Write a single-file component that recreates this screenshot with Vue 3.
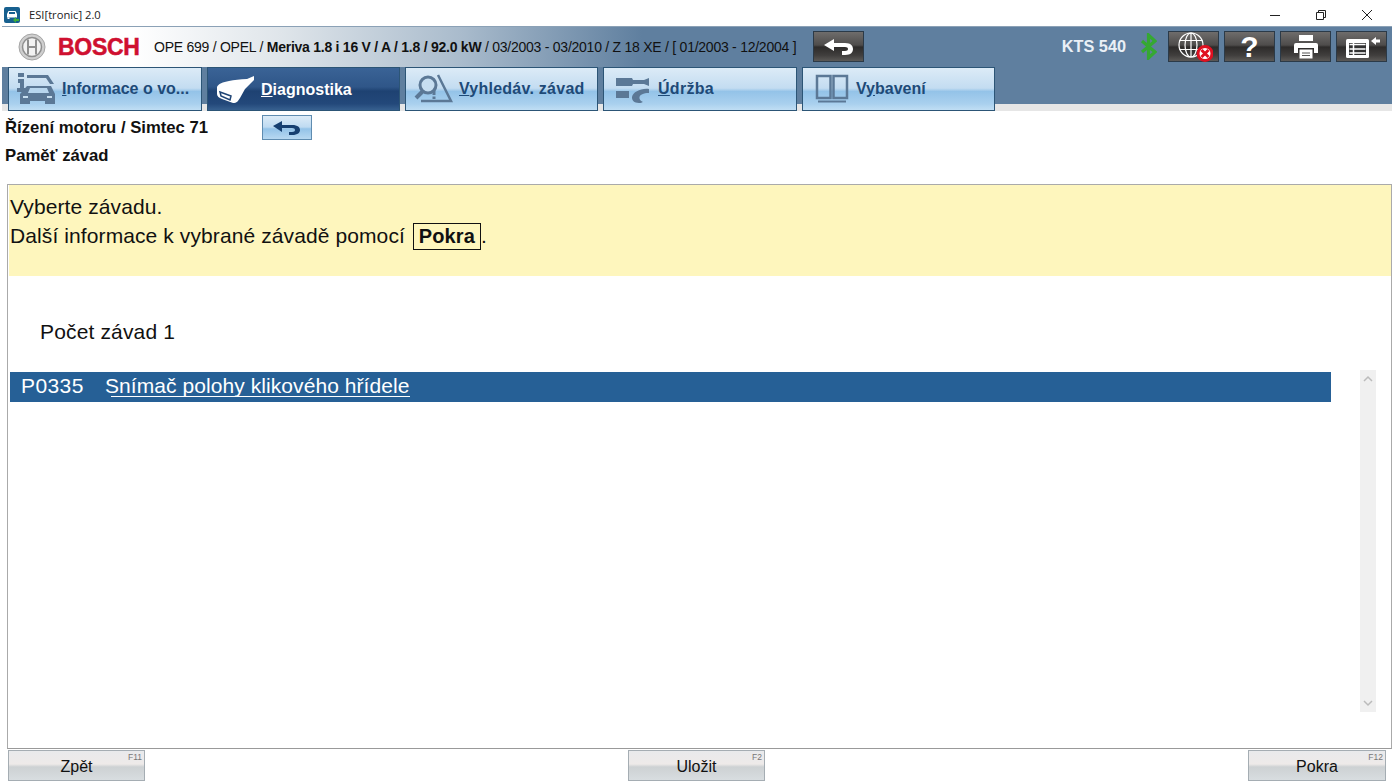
<script setup>
const tabs = [
  { key: 'info', pre: '', u: 'I', post: 'nformace o vo...', width: 194 },
  { key: 'diag', pre: '', u: 'D', post: 'iagnostika', width: 193, active: true },
  { key: 'find', pre: '', u: 'V', post: 'yhledáv. závad', width: 193 },
  { key: 'serv', pre: '', u: 'Ú', post: 'držba', width: 194 },
  { key: 'book', pre: 'V', u: 'y', post: 'bavení', width: 193 }
]
</script>

<template>
  <div class="app">
    <div class="titlebar">
      <svg class="appicon" viewBox="0 0 16 16" width="16" height="16">
        <rect x="0" y="0" width="16" height="16" rx="2" fill="#17608f" />
        <path d="M3 7l1.500-3h7l1.500 3v3.500H3z" fill="#fff" />
        <rect x="5" y="5" width="6" height="2" fill="#17608f" />
        <rect x="3.500" y="10.500" width="2" height="1.500" fill="#fff" />
        <path d="M9 13l3-3v2h3v2h-3v2z" fill="#3fae3a" />
      </svg>
      <span class="apptitle">ESI[tronic] 2.0</span>
      <div class="winctl">
        <svg width="12" height="12" viewBox="0 0 12 12"><path d="M1 6.500h10" stroke="#222" fill="none" /></svg>
        <svg width="12" height="12" viewBox="0 0 12 12"><path d="M1.500 3.500h7v7h-7zM3.500 3.500v-2h7v7h-2" stroke="#222" fill="none" /></svg>
        <svg width="12" height="12" viewBox="0 0 12 12"><path d="M1 1l10 10M11 1L1 11" stroke="#222" fill="none" /></svg>
      </div>
    </div>

    <header class="head">
      <div class="toprow">
        <svg class="boschlogo" width="28" height="28" viewBox="0 0 28 28">
          <circle cx="14" cy="14" r="13" fill="#cfcfcf" stroke="#a5a5a5" />
          <circle cx="14" cy="14" r="9.500" fill="#f2f2f2" stroke="#8f8f8f" stroke-width="1.500" />
          <path d="M10 6.500v15M18 6.500v15M10 14h8" stroke="#8f8f8f" stroke-width="2" fill="none" />
        </svg>
        <span class="bosch">BOSCH</span>
        <span class="vehicle">OPE 699 / OPEL / <b>Meriva 1.8 i 16 V / A / 1.8 / 92.0 kW</b> / 03/2003 - 03/2010 / Z 18 XE / [ 01/2003 - 12/2004 ]</span>
        <button class="darkbtn backdark">
          <svg width="32" height="18" viewBox="0 0 32 18"><path d="M1 7l10-6v4h11c6 0 8 3 8 6s-2 6-8 6h-3v-4h3c2 0 3-.8 3-2s-1-2-3-2H11v4z" fill="#fff" /></svg>
        </button>
        <span class="kts">KTS 540</span>
        <svg class="bt" width="17" height="27" viewBox="0 0 17 27">
          <path d="M2 8L15 19L8.500 25V2L15 8L2 19" fill="none" stroke="#35a832" stroke-width="3.200" />
        </svg>
        <div class="tools">
          <button class="darkbtn">
            <svg width="38" height="30" viewBox="0 0 38 30">
              <g fill="none" stroke="#fff" stroke-width="1.200">
                <circle cx="16" cy="13" r="12" />
                <ellipse cx="16" cy="13" rx="6" ry="12" />
                <path d="M16 1v24M4.500 8.500h23M4.500 17.500h23" />
              </g>
              <circle cx="30" cy="21.500" r="7" fill="#fff" stroke="#e01020" stroke-width="3" />
              <path d="M26.500 18l7 7M33.500 18l-7 7" stroke="#e01020" stroke-width="3" />
            </svg>
          </button>
          <button class="darkbtn qm">?</button>
          <button class="darkbtn">
            <svg width="26" height="26" viewBox="0 0 26 26">
              <rect x="6" y="1" width="14" height="6" fill="#fff" />
              <path d="M1 11q0-2 2-2h20q2 0 2 2v8h-4v-5H5v5H1z" fill="#fff" />
              <path d="M6.500 15.500h13v9h-13z" fill="#fff" />
              <path d="M9 19h8M9 21.500h8" stroke="#555" />
            </svg>
          </button>
          <button class="darkbtn">
            <svg width="36" height="24" viewBox="0 0 36 24">
              <rect x="2" y="4" width="23" height="19" rx="1.500" fill="#fff" />
              <rect x="5" y="8" width="17" height="12" fill="#333" />
              <path d="M5.500 9.500h16M5.500 14h16M5.500 18h16M9.500 8v12" stroke="#fff" stroke-width="1.500" />
              <path d="M27 6l5-4v2.500h4v3h-4V10z" fill="#fff" />
            </svg>
          </button>
        </div>
      </div>
      <nav class="tabs">
        <div v-for="t in tabs" :key="t.key" class="tab" :class="{ active: t.active, [t.key]: true }" :style="{ width: t.width + 'px' }">
          <svg v-if="t.key === 'info'" class="ticon" width="40" height="32" viewBox="0 0 40 32">
            <g fill="#5b7896">
              <rect x="1" y="0" width="6" height="4" />
              <path d="M1 6h6v9h3v4H0v-4h3v-5H1z" />
              <path d="M10 2h21l6 9h-4l-4-6H10z" />
              <path d="M3 21l7-8h24l4 8v7H3z" />
              <rect x="3" y="28" width="10" height="3" />
              <rect x="28" y="28" width="10" height="3" />
            </g>
            <path d="M13 15h17l2 5H11z" fill="#b8d6ee" />
            <path d="M6 24h5M30 24h5" stroke="#c8dff0" stroke-width="2" />
          </svg>
          <svg v-else-if="t.key === 'diag'" class="ticon" width="40" height="30" viewBox="0 0 40 30">
            <path d="M38 2L31 5C24 5 18 6 13 7C7 8 2 10 1 13V20C1 22 3 24 6 25L17 29C21 29 22 27 24 24L29 15L38 6Z" fill="#fff" />
            <path d="M4 18L15 22L14 26L5 22Z" fill="#fff" stroke="#1f4475" stroke-width="1.500" />
          </svg>
          <svg v-else-if="t.key === 'find'" class="ticon" width="40" height="32" viewBox="0 0 40 32">
            <path d="M24 2L37 28H7" fill="none" stroke="#5b7896" stroke-width="2.500" />
            <path d="M9 18L2 25" stroke="#5b7896" stroke-width="4" />
            <circle cx="14" cy="12" r="8" fill="#c6def1" stroke="#5b7896" stroke-width="3" />
            <path d="M20 17v5" stroke="#5b7896" stroke-width="3" />
            <path d="M20 23.500v2.500" stroke="#5b7896" stroke-width="3" />
          </svg>
          <svg v-else-if="t.key === 'serv'" class="ticon" width="36" height="28" viewBox="0 0 36 28">
            <path d="M1 3h16l1 2h11l5-2v8l-5-2H18l-1 2H1z" fill="#5b7896" />
            <path d="M1 16h13v7H1z" fill="#5b7896" />
            <path d="M34 14c-8-1-16 3-17 8-.3 3 2 6 7 6 2 0 3-.5 4-1-5-2-6-9 6-9z" fill="#5b7896" />
          </svg>
          <svg v-else-if="t.key === 'book'" class="ticon" width="34" height="30" viewBox="0 0 34 30">
            <path d="M2 2h13.500v22H2zM18.500 2H32v22H18.500z" fill="none" stroke="#5b7896" stroke-width="2.500" />
            <path d="M3 27.500h28" stroke="#5b7896" stroke-width="2" />
          </svg>
          <span class="tlabel">{{ t.pre }}<u>{{ t.u }}</u>{{ t.post }}</span>
        </div>
      </nav>
    </header>

    <section class="crumbs">
      <div class="crumbrow">
        <span class="crumb">Řízení motoru / Simtec 71</span>
        <button class="minib">
          <svg width="30" height="16" viewBox="0 0 30 16"><path d="M1 6l9-5v4h10c6 0 8 2.500 8 5s-2 5-8 5h-3v-3h3c2 0 3-.8 3-2s-1-2-3-2H10v4z" fill="#163f70" /></svg>
        </button>
      </div>
      <div class="crumb second">Paměť závad</div>
    </section>

    <main class="frame">
      <div class="hint">
        <div class="line">Vyberte závadu.</div>
        <div class="line">Další informace k vybrané závadě pomocí <span class="kbd">Pokra</span>.</div>
      </div>
      <div class="count">Počet závad 1</div>
      <div class="listwrap">
        <div class="list">
          <div class="row">
            <span class="code">P0335</span>
            <span class="desc">Snímač polohy klikového hřídele</span>
          </div>
        </div>
        <div class="scroll">
          <svg width="10" height="7" viewBox="0 0 10 7"><path d="M1 6l4-4 4 4" fill="none" stroke="#bbb" stroke-width="1.500" /></svg>
          <svg width="10" height="7" viewBox="0 0 10 7"><path d="M1 1l4 4 4-4" fill="none" stroke="#bbb" stroke-width="1.500" /></svg>
        </div>
      </div>
    </main>

    <footer class="foot">
      <button class="fbtn">Zpět<small>F11</small></button>
      <button class="fbtn">Uložit<small>F2</small></button>
      <button class="fbtn wide">Pokra<small>F12</small></button>
    </footer>
  </div>
</template>

<style scoped>
.app {
  width: 1397px;
  height: 782px;
  overflow: hidden;
  display: flex;
  flex-direction: column;
  background: #fff;
  font-family: "Liberation Sans", Arial, sans-serif;
  color: #111;
}
button { font-family: inherit; padding: 0; cursor: default; }
.titlebar {
  height: 26px;
  display: flex;
  align-items: center;
  padding: 3px 0 0 4px;
  box-sizing: border-box;
}
.apptitle {
  margin-left: 9px;
  font: 11.2px "Open Sans", sans-serif;
  color: #222;
}
.winctl {
  margin-left: auto;
  margin-right: 24px;
  display: flex;
  gap: 34px;
}
.head { margin: 0 5px 0 2px; }
.toprow {
  height: 41px;
  box-sizing: border-box;
  border-top: 1px solid #8ba1b6;
  padding: 4px 5px 0 16px;
  display: flex;
  align-items: flex-start;
  background: linear-gradient(90deg, #fff 0, #fff 130px, #dfe5ea 280px, #a9bbcc 460px, #5f7f9f 640px);
  background-color: #5f7f9f;
}
.boschlogo { margin-top: 2px; }
.bosch {
  margin-left: 12px;
  width: 96px;
  font-size: 23px;
  line-height: 33px;
  font-weight: 700;
  color: #cf1030;
  -webkit-text-stroke: .5px #cf1030;
  letter-spacing: -.3px;
}
.vehicle {
  font-size: 14px;
  line-height: 33px;
  color: #111;
  width: 659px;
  white-space: nowrap;
  letter-spacing: -.25px;
}
.darkbtn {
  width: 51px;
  height: 31px;
  box-sizing: border-box;
  border: 1px solid #2b3a48;
  background: linear-gradient(#6f6d6c, #4e4c4b 45%, #2d2b2a 52%, #403e3d 80%, #5b5957);
  display: flex;
  align-items: center;
  justify-content: center;
  color: #fff;
}
.kts {
  margin-left: auto;
  font-size: 16.300px;
  line-height: 31px;
  font-weight: 700;
  color: #eaf0f6;
}
.bt { margin: 2px 11px 0 14px; }
.tools { display: flex; gap: 5px; }
.qm { font-size: 30px; font-weight: 700; line-height: 1; }
.tabs {
  height: 44px;
  padding-left: 6px;
  display: flex;
  gap: 5px;
  background: linear-gradient(#5f7f9f 0 37px, #e6e6e6 37px);
}
.tab {
  box-sizing: border-box;
  height: 44px;
  border: 1px solid #2c5576;
  background: linear-gradient(#dcebf7, #c3dcf1 48%, #94c3e8 56%, #a9d0ee 85%, #c0def4);
  display: flex;
  align-items: center;
  padding-left: 8px;
  color: #1e4a78;
  font-size: 16px;
  font-weight: 700;
  white-space: nowrap;
}
.tab.active {
  background: linear-gradient(#3a6396, #2f5688 45%, #1e4272 55%, #23487a 85%, #37608f);
  color: #fff;
}
.ticon { flex: none; }
.tlabel { margin-left: 5px; }
.active .tlabel { margin-left: 5px; margin-top: 1px; }
.find .tlabel { margin-left: 5px; letter-spacing: .25px; }
.serv .ticon { margin-left: 3px; }
.serv .tlabel { margin-left: 7px; letter-spacing: .3px; }
.book .ticon { margin-left: 4px; }
.book .tlabel { margin-left: 7px; }
.crumbs {
  height: 73px;
  padding: 4px 0 0 5px;
  box-sizing: border-box;
}
.crumbrow { display: flex; height: 25px; align-items: center; }
.crumb {
  font-size: 16.7px;
  font-weight: 700;
  color: #111;
  width: 257px;
  white-space: nowrap;
  padding-top: 1px;
}
.second { margin-top: 2px; line-height: 25px; width: auto; }
.minib {
  width: 50px;
  height: 25px;
  box-sizing: border-box;
  border: 1px solid #5f8cb0;
  background: linear-gradient(#dcebf7, #bfdbf1 48%, #94c3e8 56%, #b7d8f1);
  display: flex;
  align-items: center;
  justify-content: center;
}
.frame {
  height: 565px;
  margin: 0 5px 0 7px;
  box-sizing: border-box;
  border: 1px solid #aaa;
  border-bottom-color: #999;
  display: flex;
  flex-direction: column;
}
.hint {
  height: 91px;
  box-sizing: border-box;
  margin-left: 1px;
  padding: 7px 0 0 1px;
  background: #fef6bd;
  font-size: 21px;
}
.line { height: 29px; line-height: 29px; letter-spacing: .1px; white-space: nowrap; }
.kbd {
  display: inline-block;
  height: 27px;
  line-height: 25px;
  box-sizing: border-box;
  border: 1px solid #111;
  padding: 0 5px;
  margin-left: 2px;
  font-weight: 700;
  font-size: 20px;
  vertical-align: top;
  margin-top: 2px;
}
.count {
  margin: 44px 0 0 32px;
  height: 24px;
  line-height: 24px;
  font-size: 21px;
  letter-spacing: .15px;
}
.listwrap {
  margin: 28px 0 0 2px;
  position: relative;
  display: flex;
  flex: 1;
  min-height: 0;
}
.list { width: 1321px; }
.row {
  height: 30px;
  background: #266096;
  color: #fff;
  font-size: 21px;
  line-height: 28px;
  padding-left: 11px;
  display: flex;
  white-space: nowrap;
}
.code { width: 84px; letter-spacing: .4px; }
.desc { position: relative; letter-spacing: .07px; }
.desc::after {
  content: "";
  position: absolute;
  left: 6px;
  right: 0;
  top: 24px;
  height: 1px;
  background: #fff;
}
.scroll {
  margin: -2px 0 0 29px;
  width: 16px;
  height: 342px;
  background: #f0f0f0;
  display: flex;
  flex-direction: column;
  align-items: center;
  justify-content: space-between;
  padding: 5px 0;
  box-sizing: border-box;
}
.foot {
  height: 32px;
  padding: 1px 11px 0 8px;
  box-sizing: border-box;
  display: flex;
  justify-content: space-between;
}
.fbtn {
  position: relative;
  width: 137px;
  height: 31px;
  box-sizing: border-box;
  border: 1px solid #a5adb3;
  background: linear-gradient(#e9eaec, #eeeae9 45%, #cdd1d3 55%, #d8dde0);
  font-size: 16px;
  color: #111;
  padding-top: 2px;
}
.fbtn.wide { width: 138px; }
.fbtn small {
  position: absolute;
  top: 1px;
  right: 2px;
  font-size: 8.500px;
  color: #777;
}
</style>

<style>
html, body { margin: 0; background: #fff; overflow: hidden; }
</style>
